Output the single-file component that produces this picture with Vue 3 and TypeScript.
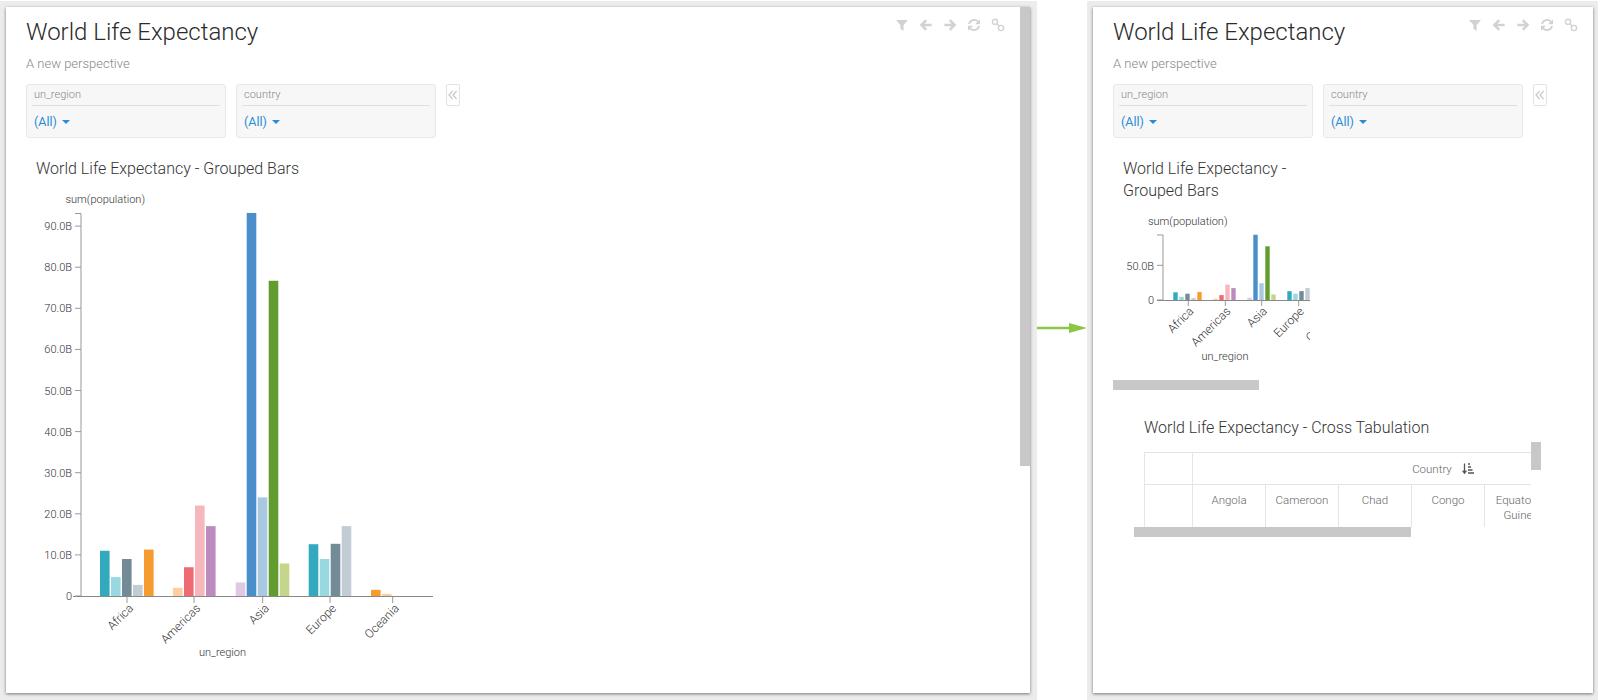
<script setup lang="ts">
interface Bar { x: number; v: number; c: string }
const C = {
  teal: '#33a9bd', ltTeal: '#98d8e0', slate: '#738a97', ltSlate: '#c1ccd4', orange: '#f59b30',
  peach: '#fdcfa0', red: '#ee6b74', pink: '#f6b6bb', purple: '#bc8abf', lilac: '#e0c9e3',
  blue: '#4a8fcb', ltBlue: '#a9c9e3', green: '#629c31', ltGreen: '#c3d68c',
}
// value in billions; index = slot position
const groups: { slots: [number, string][]; start: number }[] = [
  { start: 0, slots: [[11, C.teal], [4.6, C.ltTeal], [9, C.slate], [2.7, C.ltSlate], [11.3, C.orange]] },
  { start: 1, slots: [[2, C.peach], [7, C.red], [22, C.pink], [17, C.purple]] },
  { start: 2, slots: [[3.3, C.lilac], [93.2, C.blue], [24, C.ltBlue], [76.7, C.green], [7.9, C.ltGreen]] },
  { start: 3, slots: [[12.6, C.teal], [9, C.ltTeal], [12.7, C.slate], [17, C.ltSlate]] },
  { start: 4, slots: [[1.5, C.orange], [0.5, C.peach]] },
]
const bigStarts = [100, 173, 235.7, 308.7, 371]
const smallStarts = [1173.3, 1213.3, 1247.3, 1287.3, 1327.3]
const build = (starts: number[], step: number): Bar[] =>
  groups.flatMap((g, i) => g.slots.map(([v, c], j) => ({ x: starts[i] + j * step, v, c })))
const bigBars = build(bigStarts, 11)
const smallBars = build(smallStarts, 6)
const bigZero = 596
const smallZero = 300
const bigScale = 4.11
const smallScale = 0.7
const bigTicks = [90, 80, 70, 60, 50, 40, 30, 20, 10, 0].map((v) => ({
  y: bigZero - v * bigScale,
  label: v === 0 ? '0' : `${v}.0B`,
}))
const bigCats = [
  { x: 127, t: 'Africa' }, { x: 194, t: 'Americas' }, { x: 262.7, t: 'Asia' },
  { x: 330, t: 'Europe' }, { x: 392.7, t: 'Oceania' },
]
const smallCats = [
  { x: 1188.3, t: 'Africa' }, { x: 1225.3, t: 'Americas' }, { x: 1261.7, t: 'Asia' },
  { x: 1298.7, t: 'Europe' }, { x: 1335, t: 'Oceania' },
]
const filters = ['un_region', 'country']
const countries = ['Angola', 'Cameroon', 'Chad', 'Congo', 'Equatorial Guinea']
const cards = ['wide', 'narrow']
</script>

<template>
  <div class="page">
    <template v-for="(card, ci) in cards" :key="card">
      <div v-if="ci === 1" class="gap">
        <svg width="50" height="12" viewBox="0 0 50 12">
          <path d="M0 4.7h32V1l18 5-18 5V7.3H0z" fill="#8dc546" />
        </svg>
      </div>
      <section class="frame" :class="card">
        <div class="card">
          <div class="main">
            <header class="head">
              <h1>World Life Expectancy</h1>
              <div class="tools">
                <svg viewBox="0 0 14 14"><path d="M1 2h12L8.6 7v5.8L5.4 11V7z" fill="currentColor" /></svg>
                <svg viewBox="0 0 14 14"><path d="M7.2 2.2 2.4 7l4.8 4.8M3 7h9.6" fill="none" stroke="currentColor" stroke-width="2.5" /></svg>
                <svg viewBox="0 0 14 14"><path d="M6.8 2.2 11.6 7l-4.8 4.8M11 7H1.4" fill="none" stroke="currentColor" stroke-width="2.5" /></svg>
                <svg viewBox="0 0 14 14">
                  <path d="M2 6a5.2 5.2 0 0 1 9-2.4M12 8a5.2 5.2 0 0 1-9 2.4" fill="none" stroke="currentColor" stroke-width="1.8" />
                  <path d="M13 1.2v5H8zM1 12.8v-5h5z" fill="currentColor" />
                </svg>
                <svg viewBox="0 0 14 14">
                  <circle cx="4" cy="3.8" r="2.6" fill="none" stroke="currentColor" stroke-width="1.4" />
                  <circle cx="10" cy="10" r="2.6" fill="none" stroke="currentColor" stroke-width="1.4" />
                  <path d="M5.8 5.7 8.2 8.1" stroke="currentColor" stroke-width="1.4" />
                </svg>
              </div>
            </header>
            <p class="sub">A new perspective</p>
            <div class="filters">
              <div v-for="f in filters" :key="f" class="filter">
                <div class="f-label">{{ f }}</div>
                <div class="f-value">(All) <span class="caret"></span></div>
              </div>
              <button class="collapse" type="button" aria-label="Collapse filters">
                <svg width="10" height="10" viewBox="0 0 10 10">
                  <path d="M4.6 1 1 5l3.6 4M8.6 1 5 5l3.6 4" fill="none" stroke="#c8c8c8" stroke-width="1.2" />
                </svg>
              </button>
            </div>

            <template v-if="card === 'wide'">
              <h2 class="chart-title">World Life Expectancy - Grouped Bars</h2>
              <svg class="chart big" width="420" height="490" viewBox="26 185 420 490">
                <text x="65.5" y="203" class="lbl">sum(population)</text>
                <path d="M75 213.5h6V596" fill="none" stroke="#999" stroke-width="1" />
                <g v-for="t in bigTicks" :key="t.label">
                  <path :d="`M75 ${t.y}h6`" stroke="#999" />
                  <text :x="72" :y="t.y + 4" text-anchor="end" class="lbl">{{ t.label }}</text>
                </g>
                <rect v-for="(b, i) in bigBars" :key="i" :x="b.x" :y="bigZero - b.v * bigScale" width="9.6" :height="b.v * bigScale" :fill="b.c" />
                <path d="M73 596.5H433" stroke="#888" />
                <g v-for="c in bigCats" :key="c.t">
                  <path :d="`M${c.x} 597v6`" stroke="#999" />
                  <text :transform="`translate(${c.x + 7} 609) rotate(-45)`" text-anchor="end" class="lbl cat">{{ c.t }}</text>
                </g>
                <text x="222.5" y="656" text-anchor="middle" class="lbl">un_region</text>
              </svg>
            </template>

            <template v-else>
              <h2 class="chart-title two">World Life Expectancy - Grouped Bars</h2>
              <svg class="chart small" width="197" height="175" viewBox="1113 205 197 175">
                <text x="1148" y="225" class="lbl">sum(population)</text>
                <path d="M1157 235h6V300" fill="none" stroke="#999" />
                <path d="M1157 265.3h6M1157 300h6" stroke="#999" />
                <text x="1154" y="269.5" text-anchor="end" class="lbl">50.0B</text>
                <text x="1154" y="304" text-anchor="end" class="lbl">0</text>
                <rect v-for="(b, i) in smallBars" :key="i" :x="b.x" :y="smallZero - b.v * smallScale" width="4.4" :height="b.v * smallScale" :fill="b.c" />
                <path d="M1157 300.5H1310" stroke="#888" />
                <g v-for="c in smallCats" :key="c.t">
                  <path :d="`M${c.x} 301v5`" stroke="#999" />
                  <text :transform="`translate(${c.x + 6} 312) rotate(-45)`" text-anchor="end" class="lbl cat">{{ c.t }}</text>
                </g>
                <text x="1225" y="360" text-anchor="middle" class="lbl">un_region</text>
              </svg>
              <div class="hbar first"></div>

              <h2 class="chart-title tab">World Life Expectancy - Cross Tabulation</h2>
              <div class="crosstab">
                <div class="clip">
                  <div class="table">
                    <div class="cell corner"></div>
                    <div class="cell group">
                      Country
                      <svg class="sort" width="12" height="12" viewBox="0 0 12 12">
                        <path d="M2.5 0.5v9M0.6 7.6l1.9 2.6 1.9-2.6" fill="none" stroke="#555" stroke-width="1.3" />
                        <path d="M6 1h2M6 4h3M6 7h4.5M6 10h6" stroke="#555" stroke-width="1.4" />
                      </svg>
                    </div>
                    <div class="cell corner"></div>
                    <div v-for="c in countries" :key="c" class="cell col">{{ c }}</div>
                  </div>
                </div>
                <div class="vbar"></div>
                <div class="hbar second"></div>
              </div>
            </template>
          </div>
          <div v-if="card === 'wide'" class="vscroll"></div>
        </div>
      </section>
    </template>
  </div>
</template>

<style scoped>
.page {
  display: flex;
  width: 1598px;
  height: 700px;
  padding-top: 1px;
  box-sizing: border-box;
  background: #fff;
  font-family: Roboto, "Liberation Sans", sans-serif;
  font-weight: 300;
  overflow: hidden;
}
.frame {
  background: #ececec;
  padding: 6px 5px 0 6px;
  box-sizing: border-box;
  height: 699px;
}
.frame.wide { width: 1037px; padding-right: 7px; }
.frame.narrow { width: 511px; }
.gap {
  width: 50px;
  display: flex;
  align-items: flex-start;
  padding-top: 321px;
  box-sizing: border-box;
}
.gap svg { display: block; }
.card {
  display: flex;
  align-items: flex-start;
  height: 686px;
  background: #fff;
  box-shadow: 0 1px 3px rgba(0, 0, 0, 0.5);
}
.main {
  flex: 1;
  min-width: 0;
  padding: 0 0 0 20px;
}
.vscroll {
  width: 10px;
  height: 459px;
  background: #c8c8c8;
}
.head {
  display: flex;
  justify-content: space-between;
  align-items: flex-start;
  padding-right: 15px;
}
h1 {
  margin: 9px 0 0;
  font-size: 24px;
  line-height: 32px;
  font-weight: 300;
  color: #2b2b2b;
}
.tools {
  display: flex;
  gap: 10px;
  padding-top: 11px;
  color: #d2d2d2;
}
.tools svg { width: 14px; height: 14px; display: block; }
.sub {
  margin: 6px 0 0;
  font-size: 13px;
  line-height: 20px;
  color: #888;
}
.filters {
  display: flex;
  align-items: flex-start;
  gap: 10px;
  margin-top: 10px;
}
.filter {
  width: 200px;
  height: 54px;
  box-sizing: border-box;
  padding: 0 5px;
  background: #f7f7f7;
  border: 1px solid #e8e8e8;
  border-radius: 3px;
}
.f-label {
  height: 20px;
  line-height: 19px;
  padding: 0 2px;
  font-size: 11px;
  color: #888;
  border-bottom: 1px solid #e0e0e0;
}
.f-value {
  margin-top: 7px;
  padding-left: 2px;
  font-size: 12.5px;
  line-height: 18px;
  color: #2a8bd6;
  font-weight: 400;
}
.caret {
  display: inline-block;
  margin-left: 2px;
  vertical-align: 2px;
  border: 4.5px solid transparent;
  border-top-color: #2a8bd6;
  border-bottom: 0;
}
.collapse {
  display: flex;
  align-items: center;
  justify-content: center;
  width: 14px;
  height: 22px;
  padding: 0;
  margin: 0;
  background: #fff;
  border: 1px solid #e2e2e2;
  border-radius: 2px;
}
.chart-title {
  margin: 20px 0 0 10px;
  font-size: 16px;
  line-height: 22px;
  font-weight: 300;
  color: #333;
}
.chart-title.two { width: 172px; }
.chart-title.tab { margin: 27px 0 0 31px; }
.chart {
  display: block;
}
.chart.big { margin-top: 5px; }
.chart.small { margin-top: 3px; }
.lbl {
  font-size: 11px;
  fill: #333;
  font-weight: 300;
}
.lbl.cat { font-size: 12px; }
.hbar { background: #c8c8c8; }
.hbar.first { width: 146px; height: 10px; }
.crosstab {
  position: relative;
  margin: 13px 0 0 21px;
  width: 407px;
  padding-left: 10px;
  box-sizing: border-box;
}
.clip {
  width: 387px;
  height: 75px;
  margin-top: 2px;
  overflow: hidden;
}
.table {
  display: grid;
  grid-template-columns: 48px repeat(7, 73px);
  grid-template-rows: 32px 80px;
  width: 559px;
  border-top: 1px solid #e4e4e4;
  border-left: 1px solid #e4e4e4;
  box-sizing: border-box;
  font-size: 11.5px;
  color: #666;
}
.cell {
  border-right: 1px solid #e4e4e4;
  border-bottom: 1px solid #e4e4e4;
  box-sizing: border-box;
}
.group {
  grid-column: span 7;
  display: flex;
  justify-content: center;
  align-items: center;
  gap: 10px;
  padding-right: 10px;
}
.sort { display: block; }
.col {
  padding: 8px 4px 0;
  text-align: center;
  line-height: 15px;
}
.vbar {
  position: absolute;
  top: -10px;
  right: 0;
  width: 10px;
  height: 28px;
  background: #c8c8c8;
}
.hbar.second {
  width: 277px;
  height: 10px;
  margin-left: -10px;
}
</style>
